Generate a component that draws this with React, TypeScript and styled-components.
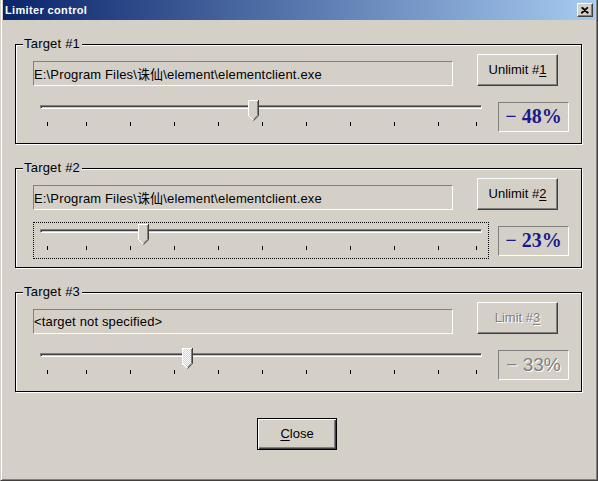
import React from 'react';
import styled, { createGlobalStyle } from 'styled-components';

const FACE = '#d4d0c8';

const GlobalStyle = createGlobalStyle`
  html, body {
    margin: 0;
    padding: 0;
    background: ${FACE};
  }
  body {
    font-family: "Liberation Sans", Arial, "Noto Sans CJK SC", sans-serif;
    font-size: 13px;
    color: #000;
  }
`;

type Target = {
  id: number;
  path: string;
  value: number;
  enabled: boolean;
  focused?: boolean;
};

const targets: Target[] = [
  { id: 1, path: 'E:\\Program Files\\诛仙\\element\\elementclient.exe', value: 48, enabled: true },
  { id: 2, path: 'E:\\Program Files\\诛仙\\element\\elementclient.exe', value: 23, enabled: true, focused: true },
  { id: 3, path: '<target not specified>', value: 33, enabled: false },
];

// tick positions measured along the slider (page x)
const ticks = [47, 86, 130, 174, 218, 262, 306, 350, 394, 438, 476];
const SLIDER_X = 34;

const Thumb: React.FC<{ disabled?: boolean }> = ({ disabled }) => (
  <svg width="11" height="21" viewBox="0 0 11 21">
    <defs>
      <pattern id="dither" width="2" height="2" patternUnits="userSpaceOnUse">
        <rect width="2" height="2" fill={FACE} />
        <rect width="1" height="1" fill="#fff" />
        <rect x="1" y="1" width="1" height="1" fill="#fff" />
      </pattern>
    </defs>
    <polygon points="0,0 11,0 11,16 5.5,21 0,16" fill={disabled ? 'url(#dither)' : FACE} />
    <polyline points="0.5,16 0.5,0.5 10,0.5" fill="none" stroke="#fff" />
    <line x1="0.5" y1="15.5" x2="5.5" y2="20.5" stroke="#fff" />
    <polyline points="10.5,0 10.5,15.7 5.5,20.7" fill="none" stroke="#404040" />
    <polyline points="9.5,1 9.5,15.3 5.5,19.3" fill="none" stroke="#808080" />
  </svg>
);

const LimiterControl: React.FC = () => (
  <Window>
    <TitleBar>
      <TitleText>Limiter control</TitleText>
      <TitleClose>
        <svg width="8" height="7" viewBox="0 0 8 7">
          <path d="M0.5 0.5 L7 6.5 M1.5 0.5 L7.5 6 M7 0.5 L0.5 6.5 M6.5 0.5 L0 6" stroke="#000" strokeWidth="1.2" />
        </svg>
      </TitleClose>
    </TitleBar>

    <Content>
      {targets.map((t) => (
        <Group key={t.id}>
          <GroupLabel>Target #{t.id}</GroupLabel>
          <TopRow>
            <PathField>{t.path}</PathField>
            <PushButton $disabled={!t.enabled}>
              {t.enabled ? 'Unlimit' : 'Limit'} #<u>{t.id}</u>
            </PushButton>
          </TopRow>
          <BottomRow>
            <SliderBox $focused={!!t.focused}>
              <Track />
              {ticks.map((x) => (
                <Tick key={x} style={{ left: x - SLIDER_X }} />
              ))}
              <ThumbHolder style={{ left: 41.8 + 4.4 * t.value - 5.5 - SLIDER_X }}>
                <Thumb disabled={!t.enabled} />
              </ThumbHolder>
            </SliderBox>
            <PercentBox $disabled={!t.enabled}>− {t.value}%</PercentBox>
          </BottomRow>
        </Group>
      ))}

      <Footer>
        <DefaultButton>
          <u>C</u>lose
        </DefaultButton>
      </Footer>
    </Content>
  </Window>
);

const Window = styled.div`
  width: 598px;
  height: 481px;
  box-sizing: border-box;
  background: ${FACE};
  border-left: 1px solid ${FACE};
  border-right: 1px solid #404040;
  border-bottom: 1px solid #404040;
  box-shadow: inset 1px 0 #fff, inset -1px -1px #808080;
  padding: 0 2px;
  display: flex;
  flex-direction: column;
`;

const TitleBar = styled.div`
  height: 20px;
  flex-shrink: 0;
  background: linear-gradient(to right, #0a246a, #a6caf0);
  display: flex;
  align-items: center;
  justify-content: space-between;
  padding: 0 2px;
`;

const TitleText = styled.span`
  color: #fff;
  font-weight: bold;
  font-size: 11px;
  font-family: "Liberation Sans", Arial, sans-serif;
  letter-spacing: 0.35px;
`;

const TitleClose = styled.div`
  width: 16px;
  height: 14px;
  box-sizing: border-box;
  background: ${FACE};
  border: 1px solid;
  border-color: #fff #404040 #404040 #fff;
  box-shadow: inset -1px -1px #808080;
  display: flex;
  align-items: center;
  justify-content: center;
  padding-right: 1px;
`;

const Content = styled.div`
  padding: 24px 0 0 12px;
  display: flex;
  flex-direction: column;
  gap: 24px;
`;

const Group = styled.div`
  position: relative;
  width: 567px;
  height: 100px;
  box-sizing: border-box;
  border: 1px solid #000;
  box-shadow: 1px 1px 0 #fff, inset 1px 1px 0 #fff;
  padding: 9px 0 0 17px;
  display: flex;
  flex-direction: column;
`;

const GroupLabel = styled.span`
  position: absolute;
  top: -9px;
  left: 7px;
  padding: 0 2px 0 1px;
  background: ${FACE};
  line-height: 16px;
  letter-spacing: 0.2px;
`;

const TopRow = styled.div`
  display: flex;
  align-items: flex-end;
  gap: 24px;
  height: 32px;
`;

const PathField = styled.div`
  width: 420px;
  height: 25px;
  box-sizing: border-box;
  border: 1px solid;
  border-color: #808080 #fff #fff #808080;
  display: flex;
  align-items: center;
  padding: 0 0 1px 0;
  white-space: nowrap;
  overflow: hidden;
  letter-spacing: 0.15px;
  font-family: "Liberation Sans", Arial, "Noto Sans CJK SC", sans-serif;
`;

const PushButton = styled.div<{ $disabled?: boolean }>`
  width: 81px;
  height: 32px;
  box-sizing: border-box;
  border: 1px solid;
  border-color: #fff #404040 #404040 #fff;
  box-shadow: inset -1px -1px #808080;
  display: flex;
  align-items: center;
  justify-content: center;
  padding-bottom: 2px;
  color: ${(p) => (p.$disabled ? '#808080' : '#000')};
  text-shadow: ${(p) => (p.$disabled ? '1px 1px 0 #fff' : 'none')};
  u {
    text-underline-offset: 2px;
  }
`;

const BottomRow = styled.div`
  display: flex;
  align-items: center;
  gap: 9px;
  margin-top: 12px;
`;

const SliderBox = styled.div<{ $focused: boolean }>`
  position: relative;
  width: 456px;
  height: 37px;
  box-sizing: border-box;
  border: 1px dotted ${(p) => (p.$focused ? '#000' : 'transparent')};
`;

const Track = styled.div`
  position: absolute;
  left: 6px;
  top: 6px;
  width: 442px;
  height: 4px;
  box-sizing: border-box;
  background: ${FACE};
  border-top: 1px solid #808080;
  border-left: 1px solid #808080;
  border-bottom: 1px solid #fff;
  border-right: 1px solid #fff;
  box-shadow: inset 1px 1px #404040;
`;

const Tick = styled.div`
  position: absolute;
  top: 23px;
  width: 1px;
  height: 4px;
  background: #000;
`;

const ThumbHolder = styled.div`
  position: absolute;
  top: 1px;
  width: 11px;
  height: 21px;
  line-height: 0;
`;

const PercentBox = styled.div<{ $disabled?: boolean }>`
  width: 71px;
  height: 30px;
  box-sizing: border-box;
  border: 1px solid;
  border-color: #808080 #fff #fff #808080;
  display: flex;
  align-items: center;
  justify-content: center;
  white-space: nowrap;
  font-family: ${(p) =>
    p.$disabled ? '"Liberation Sans", Arial, sans-serif' : '"Liberation Serif", "Times New Roman", serif'};
  font-weight: ${(p) => (p.$disabled ? 'normal' : 'bold')};
  font-size: ${(p) => (p.$disabled ? '19px' : '20px')};
  color: ${(p) => (p.$disabled ? '#808080' : '#1a1a8c')};
  text-shadow: ${(p) => (p.$disabled ? '1px 1px 0 #fff' : 'none')};
`;

const Footer = styled.div`
  display: flex;
  justify-content: center;
  padding-right: 16px;
  margin-top: 2px;
`;

const DefaultButton = styled.div`
  width: 80px;
  height: 32px;
  box-sizing: border-box;
  border: 1px solid #000;
  box-shadow: inset 1px 1px #fff, inset -1px -1px #404040, inset -2px -2px #808080;
  display: flex;
  align-items: center;
  justify-content: center;
  padding-bottom: 1px;
  u {
    text-underline-offset: 2px;
  }
`;

export default function App() {
  return (
    <>
      <GlobalStyle />
      <LimiterControl />
    </>
  );
}
